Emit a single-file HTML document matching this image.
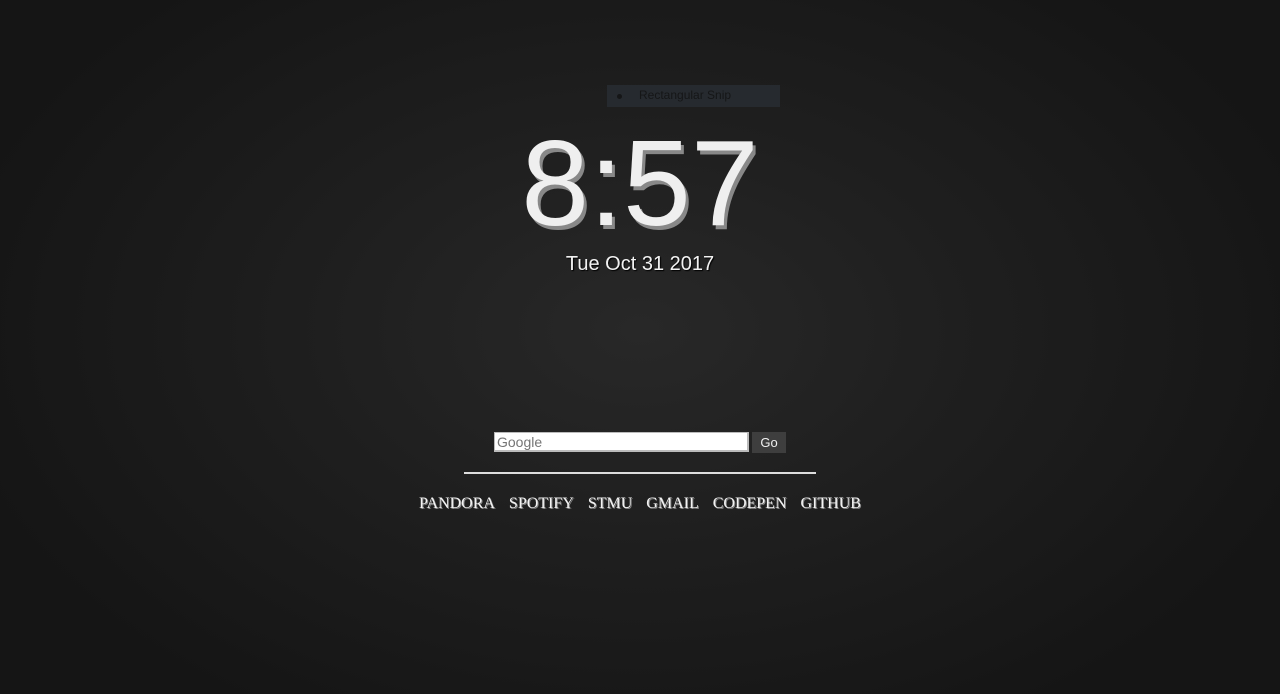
<!DOCTYPE html>
<html><head><meta charset="utf-8"><style>
html,body{margin:0;padding:0;width:1280px;height:694px;overflow:hidden}
body{background:radial-gradient(ellipse 700px 450px at 640px 330px,#282828 0%,#1f1f1f 45%,#151515 100%);font-family:"Liberation Sans",Arial,sans-serif;position:relative}
.abs{position:absolute}
.snip{left:607px;top:85px;width:173px;height:22px;background:#262a2f;}
.snip span{position:absolute;left:32px;top:3px;font-size:12px;color:#151617}
.snip i{position:absolute;left:10px;top:9px;width:5px;height:5px;border-radius:50%;background:#151617}
.clock{left:0;width:1280px;text-align:center;top:108px;font-size:122px;line-height:150px;color:#efefef;text-shadow:3px 4px 0 #888}
.date{left:0;width:1280px;text-align:center;top:251px;font-size:20px;line-height:26px;color:#f2f2f2;text-shadow:1px 1px 1px #000}
.inp{left:494px;top:432px;width:250px;height:17px;background:#fff;border:2px solid #bbb;border-width:1px 2px 2px 1px;font-size:14px;color:#757575;line-height:18px;padding-left:2px;box-sizing:content-box}
.go{left:752px;top:432px;width:34px;height:21px;background:#3e3e3e;color:#f0f0f0;font-size:13px;line-height:21px;text-align:center}
.line{left:464px;top:472px;width:352px;height:2px;background:#ddd}
.links{left:0;width:1280px;text-align:center;top:495px;font-family:"Liberation Serif","Times New Roman",serif;font-size:16px;color:#f3f3f3;text-shadow:1px 1px 0 #888}
.links span{margin:0 5px}
</style></head><body>
<div class="abs snip"><i></i><span>Rectangular Snip</span></div>
<div class="abs clock">8:57</div>
<div class="abs date">Tue Oct 31 2017</div>
<div class="abs inp">Google</div>
<div class="abs go">Go</div>
<div class="abs line"></div>
<div class="abs links"><span>PANDORA</span> <span>SPOTIFY</span> <span>STMU</span> <span>GMAIL</span> <span>CODEPEN</span> <span>GITHUB</span></div>
</body></html>
